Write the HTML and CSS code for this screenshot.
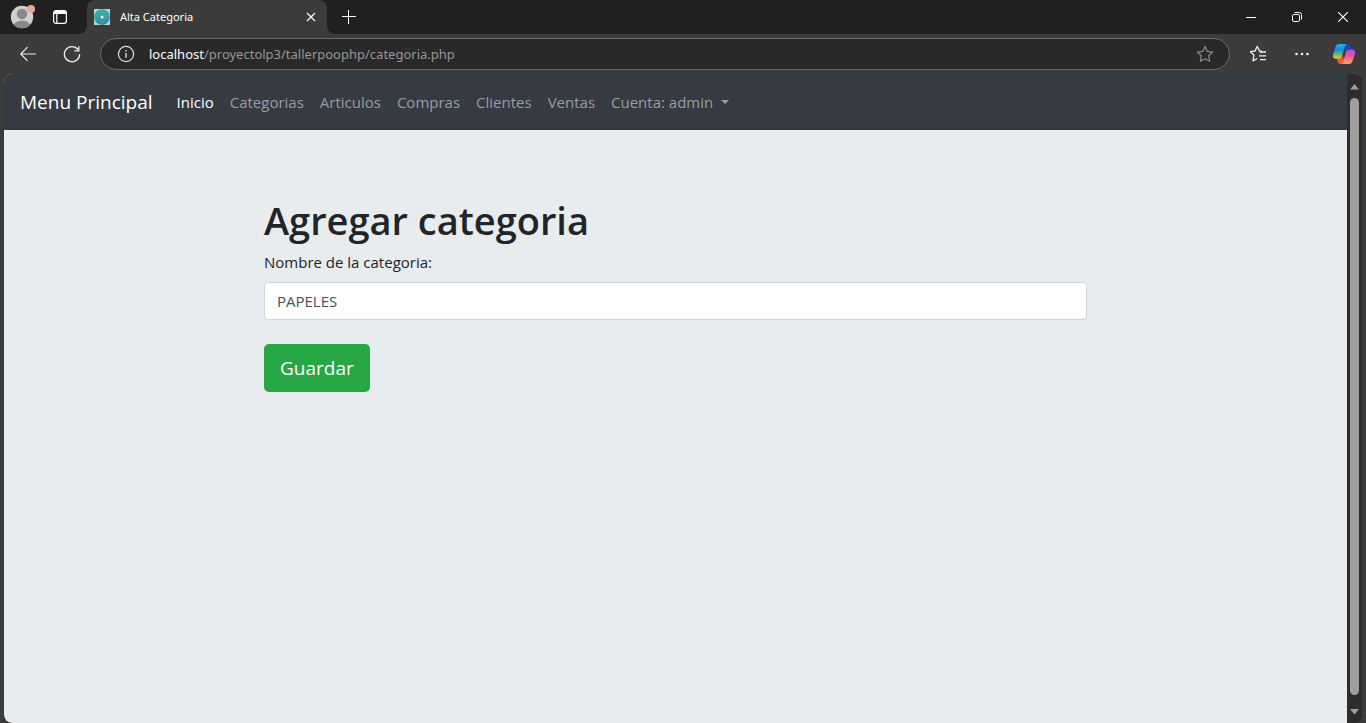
FILE: index.html
```html
<!DOCTYPE html>
<html lang="es">
<head>
<meta charset="utf-8">
<title>Alta Categoria</title>
<link rel="stylesheet" href="styles.css">
</head>
<body>
<div class="browser">
  <header class="tabstrip">
    <div class="strip-left">
      <button class="icon-btn" aria-label="Perfil">
        <svg width="28" height="28" viewBox="0 0 28 28"><defs><clipPath id="face"><circle cx="14" cy="14" r="11.2"/></clipPath></defs><circle cx="14" cy="14" r="11.2" fill="#d2d0ce"/><g clip-path="url(#face)" fill="#8a8886"><circle cx="14" cy="11" r="5.2"/><ellipse cx="14" cy="23" rx="8.6" ry="5.4"/></g><circle cx="23" cy="6" r="4" fill="#f7a29b"/></svg>
      </button>
      <button class="icon-btn" aria-label="Pestañas">
        <svg width="16" height="16" viewBox="0 0 16 16" fill="none" stroke="#fff" stroke-width="1.2"><rect x="1.600" y="1.600" width="12.800" height="12.800" rx="2.400"/><path d="M4.800 4.500v9.800"/><path d="M2 3h12M2 4.200h12" stroke-width="1.800"/></svg>
      </button>
    </div>
    <div class="tab">
      <svg width="16" height="16" viewBox="0 0 16 16"><defs><linearGradient id="disc" x1="0" y1="0" x2="0" y2="1"><stop offset="0" stop-color="#25a79c"/><stop offset="1" stop-color="#2a6c9b"/></linearGradient></defs><rect width="16" height="16" fill="#a9dbd8"/><circle cx="8" cy="8" r="7.700" fill="url(#disc)"/><g fill="none" stroke="#7cc9c6" stroke-width=".5"><circle cx="8" cy="8" r="6.300"/><circle cx="8" cy="8" r="4.800"/><circle cx="8" cy="8" r="3.300"/></g><circle cx="8" cy="8" r="2.600" fill="#20a89b"/><circle cx="8" cy="8" r="1.500" fill="#fff"/></svg>
      <span class="tab-title">Alta Categoria</span>
      <button class="icon-btn" aria-label="Cerrar pestaña">
        <svg width="10" height="10" viewBox="0 0 10 10" stroke="#fff" stroke-width="1.2"><path d="M1 1l8 8M9 1L1 9"/></svg>
      </button>
    </div>
    <button class="icon-btn new-tab" aria-label="Nueva pestaña">
      <svg width="14" height="14" viewBox="0 0 14 14" stroke="#fff"><path d="M6.500 0v14M0 6.500h14"/></svg>
    </button>
    <div class="window-controls">
      <button class="icon-btn" aria-label="Minimizar"><svg width="10" height="10" viewBox="0 0 10 10" stroke="#fff"><path d="M0 5.500h10"/></svg></button>
      <button class="icon-btn" aria-label="Restaurar"><svg width="10" height="10" viewBox="0 0 10 10" fill="none" stroke="#fff"><rect x=".5" y="2.500" width="7" height="7" rx="1.400"/><path d="M2.500.5h4.800a2.200 2.200 0 0 1 2.200 2.200v4.800"/></svg></button>
      <button class="icon-btn" aria-label="Cerrar"><svg width="10" height="10" viewBox="0 0 10 10" stroke="#fff" stroke-width="1.100"><path d="M0 0l10 10M10 0L0 10"/></svg></button>
    </div>
  </header>

  <div class="toolbar">
    <button class="icon-btn" aria-label="Atrás"><svg width="16" height="16" viewBox="0 0 16 16" fill="none" stroke="#eee" stroke-width="1.200"><path d="M7.500 1.200L.8 8l6.700 6.800M.8 8H16"/></svg></button>
    <button class="icon-btn" aria-label="Actualizar"><svg width="18" height="18" viewBox="0 0 18 18" fill="none" stroke="#eee" stroke-width="1.300"><path d="M16.600 9A7.600 7.600 0 1 1 15 4.500M15.800 1.200v4.600h-4.600"/></svg></button>
    <div class="address">
      <svg width="18" height="18" viewBox="0 0 18 18" fill="none" stroke="#ddd" stroke-width="1.200"><circle cx="9" cy="9" r="7.600"/><path d="M9 8v4.800M9 5v1.500" stroke-width="1.400"/></svg>
      <span class="url"><span class="host">localhost</span>/proyectolp3/tallerpoophp/categoria.php</span>
      <button class="icon-btn" aria-label="Favorito"><svg width="18" height="18" viewBox="0 0 18 18" fill="none" stroke="#8c8c8c" stroke-width="1.200" stroke-linejoin="round"><path d="M9 1.500l2.300 4.900 5.300.7-3.900 3.700 1 5.500L9 13.800l-4.700 2.500 1-5.500L1.400 7.100l5.300-.7z"/></svg></button>
    </div>
    <div class="tools">
      <button class="icon-btn" aria-label="Favoritos"><svg width="18" height="18" viewBox="0 0 18 18" fill="none" stroke="#eee" stroke-width="1.300" stroke-linejoin="round"><path d="M12 6.200l-2.500-.3L7.200 1.400 5 6l-4.600.7L3.900 10 3 15.900l4.200-2.400M9.500 7H16M9 10.800h7M10 14.600h6"/></svg></button>
      <button class="icon-btn" aria-label="Configuración"><svg width="16" height="16" viewBox="0 0 16 16" fill="#eee"><circle cx="2.500" cy="8" r="1.300"/><circle cx="8" cy="8" r="1.300"/><circle cx="13.500" cy="8" r="1.300"/></svg></button>
      <button class="icon-btn" aria-label="Copilot">
        <svg width="24" height="24" viewBox="0 0 24 24"><defs>
          <linearGradient id="cool" x1="0" y1="0" x2="0" y2="1"><stop offset="0" stop-color="#22b8f3"/><stop offset=".4" stop-color="#1689dd"/><stop offset=".7" stop-color="#61b978"/><stop offset="1" stop-color="#f2cf14"/></linearGradient>
          <linearGradient id="warm" x1="0" y1="0" x2="0" y2="1"><stop offset="0" stop-color="#a64df0"/><stop offset=".5" stop-color="#ee5c97"/><stop offset="1" stop-color="#ffa45b"/></linearGradient></defs>
          <path d="M12 2h4c1.800 0 2.300 1 2.800 2.800l.8 2.700h-3.400c-2 0-2.500 1-3 2.600z" fill="#1947c7"/>
          <path d="M12 22H8.500c-1.800 0-2.500-1-3-2.800L4.800 16.500h3.300c2 0 2.500-1.500 3-3z" fill="#f45b3b"/>
          <path d="M7.500 2h7.300c-1.200.2-1.700 1.400-2.100 3l-2.400 8.500c-.6 2.200-1.400 3.200-3.400 3.200H4C1.500 16.700.4 15.500 1 13L3.300 5.300C4 3 5.200 2 7.500 2z" fill="url(#cool)"/>
          <path d="M16.500 22H9.200c1.200-.2 1.700-1.400 2.100-3l2.400-8.300c.6-2.200 1.400-3.200 3.400-3.200H20c2.500 0 3.600 1.700 3 4.200l-2.300 7c-.7 2.300-1.900 3.300-4.200 3.300z" fill="url(#warm)"/>
        </svg>
      </button>
    </div>
  </div>

  <div class="viewport">
    <div class="page">
      <nav class="navbar">
        <a class="brand" href="#">Menu Principal</a>
        <ul class="menu">
          <li><a class="active" href="#">Inicio</a></li>
          <li><a href="#">Categorias</a></li>
          <li><a href="#">Articulos</a></li>
          <li><a href="#">Compras</a></li>
          <li><a href="#">Clientes</a></li>
          <li><a href="#">Ventas</a></li>
          <li><a class="dropdown" href="#">Cuenta: admin</a></li>
        </ul>
      </nav>
      <main class="content">
        <form class="category-form">
          <h1>Agregar categoria</h1>
          <label for="nombre">Nombre de la categoria:</label>
          <input id="nombre" type="text" value="PAPELES">
          <button class="save" type="button">Guardar</button>
        </form>
      </main>
    </div>
    <div class="scrollbar">
      <svg width="9" height="6" viewBox="0 0 9 6" fill="#a0a0a0"><path d="M4.500 0L9 5.500H0z"/></svg>
      <div class="thumb"></div>
      <svg width="9" height="6" viewBox="0 0 9 6" fill="#a0a0a0"><path d="M4.500 5.500L0 0h9z"/></svg>
    </div>
  </div>
</div>
</body>
</html>
```
FILE: styles.css
```css
* { box-sizing: border-box; }
body { margin: 0; font-family: "Open Sans", "Noto Sans", sans-serif; font-size: 15px; line-height: 24px; color: #212529; }
a { text-decoration: none; }
.browser { height: 100vh; display: flex; flex-direction: column; background: #3b3b3b; overflow: hidden; }
.icon-btn { display: flex; padding: 0; border: 0; background: none; }

.tabstrip { display: flex; align-items: stretch; height: 34px; flex: none; background: linear-gradient(#202020 50%, #3b3b3b 50%); }
.strip-left { display: flex; align-items: center; gap: 16px; width: 87px; padding-left: 8px; background: #202020; border-bottom-right-radius: 8px; }
.tab { display: flex; align-items: center; gap: 10px; width: 240px; padding: 0 11px 0 7px; background: #3b3b3b; border-radius: 8px 8px 0 0; }
.tab-title { flex: 1; font-family: "Noto Sans", sans-serif; font-size: 11px; line-height: 16px; color: #fff; }
.new-tab { align-items: center; padding: 0 15px; background: #202020; border-bottom-left-radius: 8px; }
.window-controls { flex: 1; display: flex; align-items: center; justify-content: flex-end; gap: 36px; padding-right: 18px; background: #202020; }

.toolbar { display: flex; align-items: center; height: 40px; flex: none; padding: 0 10px 0 20px; }
.toolbar > .icon-btn { margin-right: 27px; }
.toolbar > .icon-btn + .icon-btn { margin-right: 19px; }
.address { flex: 1; display: flex; align-items: center; gap: 14px; height: 32px; padding: 0 15px 0 16px; border: 1px solid #6a6a6a; border-radius: 16px; background: #292929; }
.url { flex: 1; font-family: "Noto Sans", sans-serif; font-size: 13px; line-height: 20px; color: #969696; }
.host { color: #fff; }
.tools { display: flex; align-items: center; gap: 26px; margin-left: 20px; }
.tools .icon-btn:last-child { margin-left: -4px; }

.viewport { flex: 1; display: flex; min-height: 0; margin: 0 4px; border-radius: 8px; overflow: hidden; background: #2c2c2c; }
.page { flex: 1; display: flex; flex-direction: column; background: #e8ecef; border-radius: 8px 0 0 8px; overflow: hidden; }
.navbar { display: flex; align-items: center; gap: 24px; height: 56px; padding: 0 16px; background: #363a42; }
.brand { font-size: 19px; line-height: 32px; color: #fff; }
.menu { display: flex; gap: 16px; margin: 0; padding: 0; list-style: none; }
.menu a { color: #999ca1; }
.menu .active { color: #fff; }
.dropdown { display: flex; align-items: center; gap: 8px; }
.dropdown::after { content: ""; border: 4px solid transparent; border-top-color: currentColor; border-bottom: 0; }

.content { flex: 1; padding: 66px 16px; }
.category-form { display: flex; flex-direction: column; align-items: flex-start; max-width: 823px; margin: 0 auto; }
h1 { margin: 0 0 6px; font-size: 38px; font-weight: 600; line-height: 48px; }
label { margin-bottom: 8px; }
#nombre { width: 100%; height: 38px; padding: 6px 12px; border: 1px solid #ced4da; border-radius: 4px; background: #fff; font: inherit; color: #495057; }
.save { height: 48px; margin-top: 24px; padding: 0 16px; border: 0; border-radius: 5px; background: #28a745; color: #fff; font: inherit; font-size: 19px; }

.scrollbar { display: flex; flex-direction: column; align-items: center; gap: 8px; width: 15px; padding: 10px 0 8px; }
.thumb { flex: 1; width: 9px; margin-bottom: 6px; border-radius: 5px; background: #9f9f9f; }
```
